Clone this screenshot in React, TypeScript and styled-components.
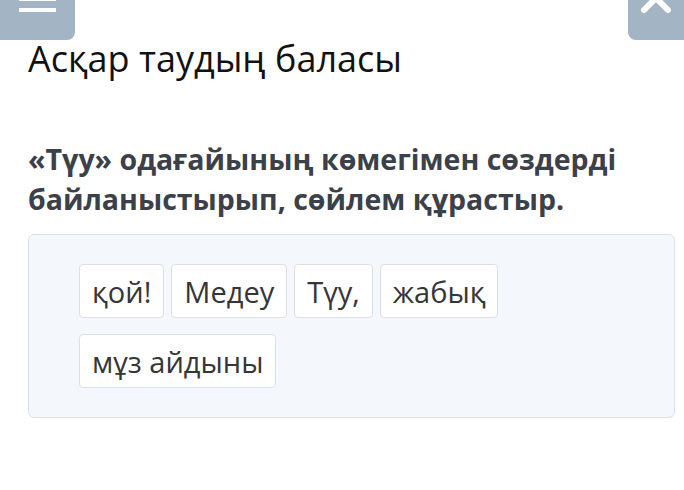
import styled, {createGlobalStyle} from "styled-components";

const GlobalStyle = createGlobalStyle`
  html, body {
    margin: 0;
    padding: 0;
    background: #ffffff;
    font-family: "Open Sans", "Liberation Sans", sans-serif;
  }
`

const Page = styled.div`
  width: 684px;
  height: 490px;
  overflow: hidden;
  display: flex;
  flex-direction: column;
`

const TopBar = styled.div`
  display: flex;
  justify-content: space-between;
  height: 0;
  position: relative;
`

const CornerButton = styled.div<{ $side: "left" | "right" }>`
  position: absolute;
  top: 0;
  ${props => props.$side === "left" ? "left: 0;" : "right: 0;"}
  width: ${props => props.$side === "left" ? "75px" : "56px"};
  height: 40px;
  background: #a3b5c4;
  border-radius: ${props => props.$side === "left" ? "0 0 8px 0" : "0 0 0 8px"};
  display: flex;
  justify-content: center;
`

const Burger = styled.div`
  display: flex;
  flex-direction: column;
  gap: 7px;
  margin-top: -3px;

  span {
    display: block;
    width: 37px;
    height: 4px;
    background: #ffffff;
  }
`

const Content = styled.div`
  padding: 35px 9px 0 28px;
`

const Title = styled.h1`
  margin: 0;
  font-size: 36px;
  font-weight: 400;
  line-height: 48px;
  color: #111111;
`

const Question = styled.p`
  margin: 56px 0 0;
  font-size: 28.5px;
  font-weight: 700;
  line-height: 40px;
  color: #3c4048;
`

const WordBox = styled.div`
  margin-top: 15px;
  background: #f4f8fc;
  border: 1px solid #dce1e6;
  border-radius: 6px;
  padding: 29px 40px 29px 50px;
  display: flex;
  flex-wrap: wrap;
  column-gap: 7px;
  row-gap: 16px;
`

const Chip = styled.div`
  background: #ffffff;
  border: 1px solid #dcdfe3;
  border-radius: 4px;
  height: 52px;
  padding: 0 12px;
  display: flex;
  align-items: center;
  font-size: 29px;
  color: #363636;
`

const words = ["қой!", "Медеу", "Түу,", "жабық", "мұз айдыны"];

const App = () => {
  return (
    <Page>
      <GlobalStyle />
      <TopBar>
        <CornerButton $side="left">
          <Burger>
            <span />
            <span />
          </Burger>
        </CornerButton>
        <CornerButton $side="right">
          <svg width="40" height="40" viewBox="0 0 40 40" style={{marginTop: -22}}>
            <path d="M8 8 L32 32 M32 8 L8 32" stroke="#ffffff" strokeWidth="6" strokeLinecap="round" />
          </svg>
        </CornerButton>
      </TopBar>
      <Content>
        <Title>Асқар таудың баласы</Title>
        <Question>«Түу» одағайының көмегімен сөздерді байланыстырып, сөйлем құрастыр.</Question>
        <WordBox>
          {words.map(word => (
            <Chip key={word}>{word}</Chip>
          ))}
        </WordBox>
      </Content>
    </Page>
  );
}

export default App;
